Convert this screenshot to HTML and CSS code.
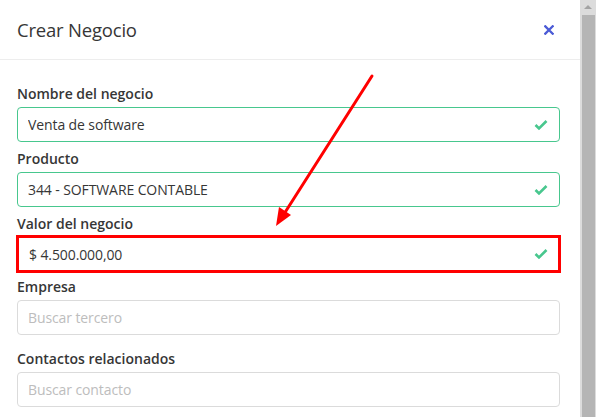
FILE: index.html
```html
<!DOCTYPE html>
<html lang="es">
<head>
  <meta charset="UTF-8" />
  <title>Crear Negocio</title>
  <link rel="stylesheet" href="styles.css">
</head>
<body>
  <div class="page">
    <div class="modal">
      <header class="modal-head">
        <p class="modal-title">Crear Negocio</p>
        <button class="close" aria-label="cerrar">
          <svg width="10" height="10" viewBox="0 0 10 10"><path d="M1.3 1.3 L8.7 8.7 M8.7 1.3 L1.3 8.7" stroke="#4b5bd6" stroke-width="2.3" stroke-linecap="square"/></svg>
        </button>
      </header>

      <section class="modal-body">
        <div class="field">
          <label class="label">Nombre del negocio</label>
          <div class="control">
            <input class="input is-success" type="text" value="Venta de software">
            <span class="check"><svg width="14" height="11" viewBox="0 0 14 11"><path d="M1.5 5.5 L5 9 L12.5 1.5" fill="none" stroke="#48c78e" stroke-width="2.6"/></svg></span>
          </div>
        </div>

        <div class="field">
          <label class="label">Producto</label>
          <div class="control">
            <input class="input is-success" type="text" value="344 - SOFTWARE CONTABLE">
            <span class="check"><svg width="14" height="11" viewBox="0 0 14 11"><path d="M1.5 5.5 L5 9 L12.5 1.5" fill="none" stroke="#48c78e" stroke-width="2.6"/></svg></span>
          </div>
        </div>

        <div class="field">
          <label class="label">Valor del negocio</label>
          <div class="control">
            <input class="input is-marked" type="text" value="$ 4.500.000,00">
            <span class="check"><svg width="14" height="11" viewBox="0 0 14 11"><path d="M1.5 5.5 L5 9 L12.5 1.5" fill="none" stroke="#48c78e" stroke-width="2.6"/></svg></span>
          </div>
        </div>

        <div class="field spaced">
          <label class="label">Empresa</label>
          <div class="control">
            <input class="input" type="text" placeholder="Buscar tercero">
          </div>
        </div>

        <div class="field">
          <label class="label">Contactos relacionados</label>
          <div class="control">
            <input class="input" type="text" placeholder="Buscar contacto">
          </div>
        </div>
      </section>

      <!-- annotation arrow -->
      <svg class="arrow" width="596" height="417" viewBox="0 0 596 417">
        <line x1="372" y1="76" x2="284" y2="214" stroke="#ff0000" stroke-width="3" stroke-linecap="round"/>
        <polygon points="276,226 279,207 291,215" fill="#ff0000"/>
      </svg>
    </div>

    <div class="scrollbar">
      <div class="scroll-up"></div>
      <div class="scroll-thumb"></div>
    </div>
  </div>
</body>
</html>
```

FILE: styles.css
```css
html, body {
  margin: 0;
  height: 100%;
  overflow: hidden;
}
body {
  font-family: 'Open Sans', 'Noto Sans', sans-serif;
  color: #363636;
  background: #fff;
}
.page {
  display: flex;
  height: 417px;
}
.modal {
  flex: 1;
  background: #fff;
}
.modal-head {
  height: 60px;
  box-sizing: border-box;
  border-bottom: 1px solid #ededed;
  display: flex;
  align-items: center;
  justify-content: space-between;
  padding: 0 26px 0 17px;
}
.modal-title {
  margin: 0;
  font-size: 18.5px;
  color: #363636;
  letter-spacing: -0.2px;
}
.close {
  border: none;
  background: none;
  padding: 0;
  width: 10px;
  height: 10px;
  display: flex;
}
.modal-body {
  padding: 24px 20px 0 17px;
}
.field {
  margin-bottom: 7px;
}
.field.spaced {
  margin-bottom: 14px;
}
.label {
  display: block;
  font-weight: 600;
  font-size: 14px;
  line-height: 20px;
  margin-bottom: 3px;
  color: #363636;
}
.control {
  position: relative;
}
.input {
  display: block;
  box-sizing: border-box;
  width: 100%;
  height: 35px;
  padding: 0 40px 0 10px;
  font-family: inherit;
  font-size: 14px;
  letter-spacing: -0.1px;
  color: #363636;
  border: 1px solid #dbdbdb;
  border-radius: 4px;
  outline: none;
}
.input::placeholder {
  color: #bdbdbd;
}
.input.is-success {
  border-color: #48c78e;
}
.input.is-marked {
  border: 3px solid #ff0000;
  border-radius: 0;
  height: 38px;
  width: calc(100% + 2px);
  margin: -2px 0 -3px -1px;
  padding-left: 10px;
}
.check {
  position: absolute;
  right: 12px;
  top: 50%;
  transform: translateY(-50%);
  display: flex;
}
.arrow {
  position: absolute;
  left: 0;
  top: 0;
  pointer-events: none;
}
.scrollbar {
  width: 16px;
  background: #dcdcdc;
  display: flex;
  flex-direction: column;
  align-items: center;
}
.scroll-up {
  height: 15px;
  width: 100%;
  position: relative;
}
.scroll-up::after {
  content: "";
  position: absolute;
  left: 4px;
  top: 5px;
  border-left: 4px solid transparent;
  border-right: 4px solid transparent;
  border-bottom: 4px solid #a3a3a3;
}
.scroll-thumb {
  flex: 1;
  width: 13px;
  margin-left: 1px;
  background: #b5b5b5;
}
```
